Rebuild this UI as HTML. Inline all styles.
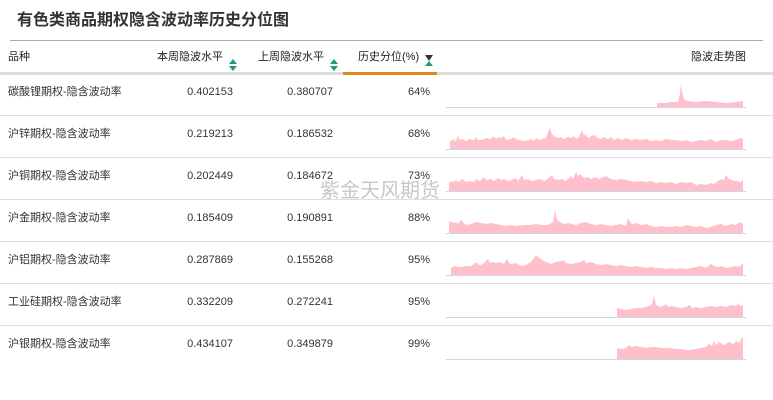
<!DOCTYPE html>
<html><head><meta charset="utf-8"><style>
body{margin:0;width:773px;height:400px;background:#fff;position:relative;overflow:hidden;font-family:"Liberation Sans","Noto Sans CJK SC",sans-serif;color:#333;font-size:11px}
.a{position:absolute;white-space:nowrap;line-height:14px}
.t{left:17px;top:12px;font-size:16px;font-weight:bold;color:#333;line-height:18px}
.hl{position:absolute;left:10px;width:753px;height:1px;background:#aaa;top:40px}
.h{top:50px;font-size:11px;color:#222}
.hb{position:absolute;left:0;width:773px;height:3px;background:#ddd;top:72px}
.rl{position:absolute;left:0;width:773px;height:1px;background:#ddd}
.r{text-align:right}
svg{position:absolute;left:446px}
</style></head><body>
<div class="a t">有色类商品期权隐含波动率历史分位图</div>
<div class="hl"></div>
<div class="a h" style="left:8px">品种</div>
<div class="a h" style="left:157px">本周隐波水平</div>
<div class="a h" style="left:258px">上周隐波水平</div>
<div class="a h" style="left:358px">历史分位(%)</div>
<div class="a h" style="left:691px">隐波走势图</div>
<svg style="left:228px;top:59px" width="10" height="12"><path d="M5 0L9 5H1Z M1 7H9L5 12Z" fill="#1a9a8a"/></svg>
<svg style="left:329px;top:59px" width="10" height="12"><path d="M5 0L9 5H1Z M1 7H9L5 12Z" fill="#1a9a8a"/></svg>
<svg style="left:424px;top:55px" width="10" height="12"><path d="M1 0H9L5 6Z" fill="#333"/><path d="M5 6L9 11H1Z" fill="#1a9a8a"/></svg>
<div class="hb"></div>
<div style="position:absolute;left:343px;top:72px;width:94px;height:3px;background:#e8821e"></div>

<div class="rl" style="top:115px"></div><div class="rl" style="top:157px"></div><div class="rl" style="top:199px"></div><div class="rl" style="top:241px"></div><div class="rl" style="top:283px"></div><div class="rl" style="top:325px"></div>

<div class="a" style="left:320px;top:179px;font-size:20px;color:#c8c8c8;line-height:24px">紫金天风期货</div>

<div class="a" style="left:8px;top:85px">碳酸锂期权-隐含波动率</div><div class="a r" style="right:540px;top:85px">0.402153</div><div class="a r" style="right:440px;top:85px">0.380707</div><div class="a r" style="right:343px;top:85px">64%</div>
<div class="a" style="left:8px;top:127px">沪锌期权-隐含波动率</div><div class="a r" style="right:540px;top:127px">0.219213</div><div class="a r" style="right:440px;top:127px">0.186532</div><div class="a r" style="right:343px;top:127px">68%</div>
<div class="a" style="left:8px;top:169px">沪铜期权-隐含波动率</div><div class="a r" style="right:540px;top:169px">0.202449</div><div class="a r" style="right:440px;top:169px">0.184672</div><div class="a r" style="right:343px;top:169px">73%</div>
<div class="a" style="left:8px;top:211px">沪金期权-隐含波动率</div><div class="a r" style="right:540px;top:211px">0.185409</div><div class="a r" style="right:440px;top:211px">0.190891</div><div class="a r" style="right:343px;top:211px">88%</div>
<div class="a" style="left:8px;top:253px">沪铝期权-隐含波动率</div><div class="a r" style="right:540px;top:253px">0.287869</div><div class="a r" style="right:440px;top:253px">0.155268</div><div class="a r" style="right:343px;top:253px">95%</div>
<div class="a" style="left:8px;top:295px">工业硅期权-隐含波动率</div><div class="a r" style="right:540px;top:295px">0.332209</div><div class="a r" style="right:440px;top:295px">0.272241</div><div class="a r" style="right:343px;top:295px">95%</div>
<div class="a" style="left:8px;top:337px">沪银期权-隐含波动率</div><div class="a r" style="right:540px;top:337px">0.434107</div><div class="a r" style="right:440px;top:337px">0.349879</div><div class="a r" style="right:343px;top:337px">99%</div>

<svg style="top:74px" width="300" height="40"><line x1="0" y1="33.5" x2="300" y2="33.5" stroke="#ccd6e6"/><polygon fill="#ffc0cb" points="211,33 211,29 220,29 225,28 232,28 234,20 235,10 236,18 238,25 241,27 250,28 260,27 270,28 280,29 290,28 297,27 297,33"/></svg>
<svg style="top:116px" width="300" height="40"><line x1="0" y1="33.5" x2="300" y2="33.5" stroke="#ccd6e6"/><polygon fill="#ffc0cb" points="4,33 4,24 6,25 8,23 9,26 12,20 14,24 17,23 20,25 24,23 28,24 30,21 32,24 36,24 40,22 45,23 47,20 50,23 53,21 55,22 58,20 60,24 65,23 68,21 70,23 73,24 78,25 82,24 85,23 88,25 90,22 93,24 96,23 100,22 102,16 104,12 106,18 108,20 112,22 115,21 118,23 122,21 125,22 128,20 130,23 133,21 136,14 138,20 140,18 142,22 145,20 148,19 152,22 155,23 158,21 162,23 165,21 168,24 172,22 176,24 180,22 185,24 190,23 195,24 200,23 205,25 210,24 215,25 220,23 225,24 230,24 235,25 240,24 245,26 250,25 255,24 260,25 265,23 270,26 275,24 280,24 285,25 290,24 294,22 297,23 297,33"/></svg>
<svg style="top:158px" width="300" height="40"><line x1="0" y1="33.5" x2="300" y2="33.5" stroke="#ccd6e6"/><polygon fill="#ffc0cb" points="3,33 3,25 6,23 8,24 10,22 13,24 16,21 20,24 24,23 28,24 30,21 34,23 38,19 40,22 45,21 48,23 52,20 55,22 58,21 62,23 65,22 70,20 72,23 76,17 78,22 82,21 86,23 90,22 95,21 98,23 100,22 104,19 106,17 108,21 112,22 116,21 120,23 125,18 127,21 130,14 132,18 134,16 138,20 142,19 145,21 150,19 152,21 155,20 160,18 165,21 170,22 175,21 180,22 185,23 188,24 195,23 200,24 205,23 210,25 215,24 220,25 225,24 230,26 235,24 240,25 245,24 250,27 255,26 260,27 265,25 268,26 272,23 276,21 278,22 280,17 283,21 285,22 290,23 295,24 297,21 297,33"/></svg>
<svg style="top:200px" width="300" height="40"><line x1="0" y1="33.5" x2="300" y2="33.5" stroke="#ccd6e6"/><polygon fill="#ffc0cb" points="3,33 3,21 6,22 8,23 10,22 12,24 15,20 18,23 20,25 25,24 30,22 35,23 40,24 45,23 50,24 55,25 60,26 65,25 70,26 80,25 85,25 90,24 95,25 100,25 104,24 107,22 109,10 111,20 114,22 118,24 122,23 126,24 130,25 135,23 140,22 145,24 150,25 155,24 160,25 165,26 170,25 175,24 180,26 182,18 184,22 186,24 190,23 195,25 200,24 205,26 210,27 215,26 220,27 225,27 230,26 235,27 240,25 245,26 250,27 255,26 260,28 265,27 270,25 275,24 280,26 285,24 290,25 293,22 297,24 297,33"/></svg>
<svg style="top:242px" width="300" height="40"><line x1="0" y1="33.5" x2="300" y2="33.5" stroke="#ccd6e6"/><polygon fill="#ffc0cb" points="5,33 5,26 8,24 12,25 15,25 20,24 25,24 28,22 30,20 33,23 35,23 38,21 42,17 44,21 46,20 50,21 55,20 58,22 61,17 63,21 65,22 70,21 75,24 80,23 85,20 88,16 90,13 93,16 95,17 100,20 105,22 110,20 115,19 118,18 120,21 125,22 130,21 135,20 138,18 140,21 145,20 150,22 155,23 160,22 165,23 170,24 175,23 180,24 185,25 190,24 195,25 200,26 205,25 210,26 215,26 220,27 225,26 230,27 235,26 240,27 245,26 250,25 255,24 260,26 265,22 268,24 272,25 275,24 280,26 285,25 290,24 293,25 297,21 297,33"/></svg>
<svg style="top:284px" width="300" height="40"><line x1="0" y1="33.5" x2="300" y2="33.5" stroke="#ccd6e6"/><polygon fill="#ffc0cb" points="171,33 171,24 175,25 180,26 185,25 190,24 195,24 200,23 203,22 206,20 208,12 210,21 213,22 215,23 220,20 222,23 225,22 230,23 235,24 240,23 244,21 246,24 250,23 255,24 260,23 265,22 270,23 275,22 280,23 285,21 290,22 292,19 294,22 297,21 297,33"/></svg>
<svg style="top:326px" width="300" height="40"><line x1="0" y1="33.5" x2="300" y2="33.5" stroke="#ccd6e6"/><polygon fill="#ffc0cb" points="171,33 171,22 176,23 180,22 183,19 186,21 190,20 195,21 200,22 205,21 210,21 215,22 220,22 225,22 230,23 235,23 240,24 245,24 250,23 255,22 260,21 263,18 266,20 268,15 270,19 273,16 276,18 279,19 282,16 285,17 288,18 290,15 293,17 297,10 297,33"/></svg>
</body></html>
